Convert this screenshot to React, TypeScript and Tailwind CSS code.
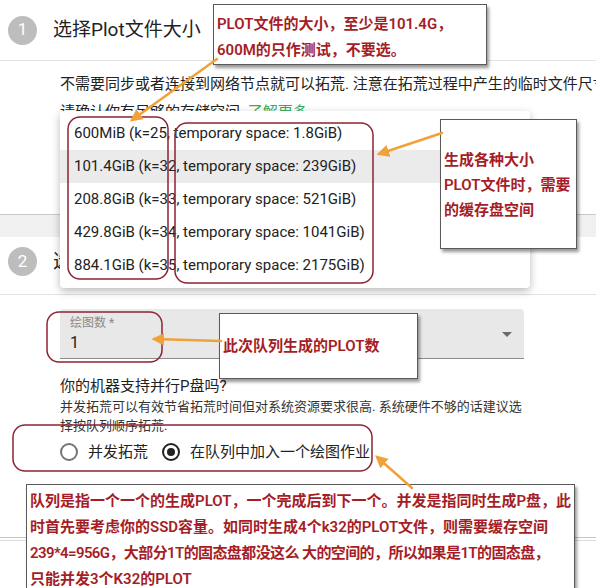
const menuItems = [
  "600MiB (k=25, temporary space: 1.8GiB)",
  "101.4GiB (k=32, temporary space: 239GiB)",
  "208.8GiB (k=33, temporary space: 521GiB)",
  "429.8GiB (k=34, temporary space: 1041GiB)",
  "884.1GiB (k=35, temporary space: 2175GiB)",
];

const font = { fontFamily: "Roboto, 'Noto Sans CJK SC', sans-serif" };

function StepCircle({ n }: { n: number }) {
  return (
    <div className="w-[29px] h-[29px] rounded-full bg-[#bdbdbd] text-white flex items-center justify-center text-[17px] shrink-0">
      {n}
    </div>
  );
}

function Radio({ checked }: { checked?: boolean }) {
  return (
    <div
      className={
        checked
          ? "w-[18px] h-[18px] rounded-full border-2 border-[#222] flex items-center justify-center"
          : "w-[18px] h-[18px] rounded-full border-2 border-[#757575]"
      }
    >
      {checked && <div className="w-[8px] h-[8px] rounded-full bg-[#222]" />}
    </div>
  );
}

function Note({ className, children }: { className: string; children: React.ReactNode }) {
  return (
    <div
      className={`absolute bg-white border border-[#5a5a5a] shadow-[2px_3px_3px_rgba(0,0,0,0.4)] text-[15px] font-semibold text-[#a51d26] whitespace-nowrap ${className}`}
    >
      {children}
    </div>
  );
}

export default function App() {
  return (
    <div className="relative w-[596px] h-[588px] overflow-hidden bg-white text-[#222]" style={font}>
      {/* Step 1 card */}
      <div className="bg-white border-b border-[#c9c9c9]">
        <div className="h-[61px] flex items-center gap-4 pl-2 border-b border-[#e2e2e2]">
          <StepCircle n={1} />
          <div className="text-[19px] text-[#222]">选择Plot文件大小</div>
        </div>
        <div className="h-[153px] pl-[60px] pt-[9px] text-[15px] leading-[28px] whitespace-nowrap overflow-hidden">
          <div>不需要同步或者连接到网络节点就可以拓荒. 注意在拓荒过程中产生的临时文件尺寸</div>
          <div>
            请确认你有足够的存储空间. <span className="text-[#3aac59]">了解更多</span>
          </div>
        </div>
      </div>

      <div className="h-[22px] bg-[#f0f0f0]" />

      {/* Step 2 card */}
      <div className="bg-white border-b border-[#c4c4c4]">
        <div className="h-[58px] flex items-start pt-[10px] gap-4 pl-2 border-b border-[#e2e2e2]">
          <StepCircle n={2} />
          <div className="text-[19px] text-[#222] mt-[1px]">选择绘图数量</div>
        </div>
        <div className="h-[242px] pl-[60px] pt-[14px]">
          <div className="w-[464px] h-[50px] bg-[#e8e8e8] rounded-t-[4px] border-b border-[#8c8c8c] pl-[10px] pr-[12px] flex items-center">
            <div className="flex-1">
              <div className="text-[12px] leading-[16px] text-[#8a8a8a]">绘图数 *</div>
              <div className="text-[16px] leading-[20px] mt-[2px]">1</div>
            </div>
            <svg width="10" height="5" viewBox="0 0 10 5" className="mt-[2px]">
              <path d="M0 0 L10 0 L5 5 Z" fill="#6b6b6b" />
            </svg>
          </div>
          <div className="mt-[16px] text-[15px] leading-[22px]">你的机器支持并行P盘吗?</div>
          <div className="text-[13px] leading-[19px] text-[#333] w-[470px]">
            并发拓荒可以有效节省拓荒时间但对系统资源要求很高. 系统硬件不够的话建议选择按队列顺序拓荒.
          </div>
          <div className="mt-[5px] h-[24px] flex items-center text-[15px]">
            <Radio />
            <span className="ml-[10px]">并发拓荒</span>
            <div className="ml-[14px]">
              <Radio checked />
            </div>
            <span className="ml-[10px]">在队列中加入一个绘图作业</span>
          </div>
        </div>
      </div>
      <div className="h-[2px]" />
      <div className="border-t border-[#dcdcdc]" />

      {/* Open dropdown menu */}
      <div className="absolute left-[60px] top-[111px] w-[470px] bg-white rounded-[4px] shadow-[0_3px_8px_rgba(0,0,0,0.28)] py-[6px] text-[15px]">
        {menuItems.map((item, i) => (
          <div
            key={item}
            className={`h-[33px] pl-[14px] flex items-center whitespace-nowrap ${i === 1 ? "bg-[#ebebeb]" : ""}`}
          >
            {item}
          </div>
        ))}
      </div>

      {/* Annotation boxes */}
      <Note className="left-[213px] top-[4px] w-[274px] h-[61px] pl-[3px] pt-[6px] leading-[26px]">
        <div>PLOT文件的大小，至少是101.4G，</div>
        <div>600M的只作测试，不要选。</div>
      </Note>
      <Note className="left-[440px] top-[119px] w-[137px] h-[130px] pl-[3px] pt-[28px] leading-[25px]">
        <div>生成各种大小</div>
        <div>PLOT文件时，需要</div>
        <div>的缓存盘空间</div>
      </Note>
      <Note className="left-[219px] top-[313px] w-[199px] h-[66px] pl-[3px] flex items-center">
        此次队列生成的PLOT数
      </Note>
      <Note className="left-[26px] top-[484px] w-[549px] h-[120px] pl-[3px] pt-[3px] leading-[26px]">
        <div>队列是指一个一个的生成PLOT，一个完成后到下一个。并发是指同时生成P盘，此</div>
        <div>时首先要考虑你的SSD容量。如同时生成4个k32的PLOT文件，则需要缓存空间</div>
        <div className="tracking-[-0.6px]">239*4=956G，大部分1T的固态盘都没这么 大的空间的，所以如果是1T的固态盘，</div>
        <div>只能并发3个K32的PLOT</div>
      </Note>

      {/* Outlines and arrows */}
      <svg className="absolute left-0 top-0 pointer-events-none" width="596" height="588" viewBox="0 0 596 588">
        <defs>
          <marker id="head" viewBox="0 0 10 10" refX="8" refY="5" markerWidth="5" markerHeight="5" orient="auto">
            <path d="M0 0 L10 5 L0 10 Z" fill="#f0a13a" />
          </marker>
        </defs>
        <g fill="none" stroke="#8e2332" strokeWidth="1.5">
          <rect x="68" y="117" width="100" height="162" rx="12" />
          <rect x="175" y="123" width="198" height="160" rx="12" />
          <rect x="47" y="312" width="115" height="50" rx="12" />
          <rect x="13" y="425" width="359" height="46" rx="12" />
        </g>
        <g stroke="#f0a13a" strokeWidth="2.5" strokeLinecap="round" markerEnd="url(#head)">
          <line x1="217" y1="59" x2="132" y2="120" />
          <line x1="442" y1="133" x2="379" y2="154" />
          <line x1="221" y1="341" x2="154" y2="339" />
          <line x1="412" y1="488" x2="377" y2="457" />
        </g>
      </svg>
    </div>
  );
}
